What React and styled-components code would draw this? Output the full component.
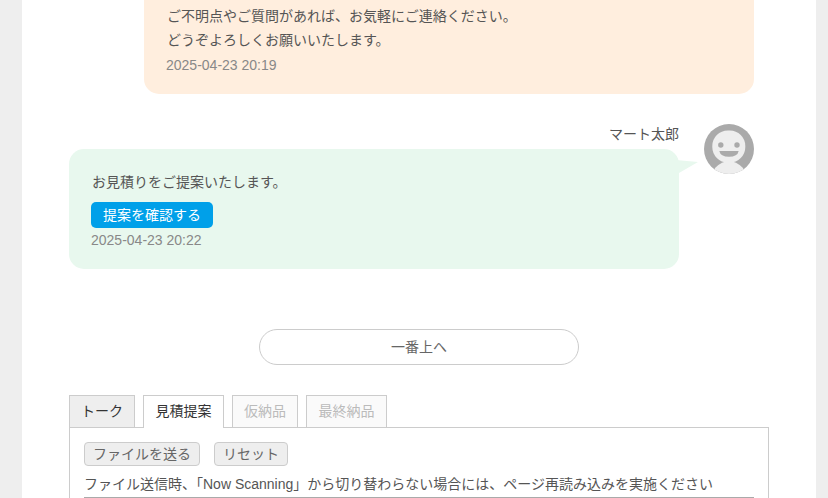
import React from "react";
import styled, { createGlobalStyle } from "styled-components";

const Global = createGlobalStyle`
  html, body { margin: 0; padding: 0; height: 498px; overflow: hidden; background: #eeeeee; }
  body { font-family: "Liberation Sans", "Noto Sans CJK JP", sans-serif; font-size: 14px; color: #555; }
  * { box-sizing: border-box; }
`;
const Page = styled.main`
  width: 794px; height: 498px; margin-left: 22px; background: #fff; overflow: hidden;
  padding: 0 47px;
`;
const PeachBubble = styled.section`
  width: 610px; height: 94px; margin-left: 75px; padding: 4px 22px 0 23px;
  background: #ffeede; border-radius: 0 0 15px 15px;
`;
const Line = styled.p`
  margin: 0; line-height: 24px; color: #555; white-space: nowrap;
`;
const Time = styled.div`
  line-height: 20px; color: #888; margin-top: 2px;
`;
const PeachTime = styled(Time)`
  margin-top: 3px; margin-left: -1px;
`;
const SenderRow = styled.div`
  display: flex; justify-content: flex-end; gap: 25px; margin-top: 30px; height: 25px; width: 685px;
`;
const Name = styled.span`
  line-height: 21px; color: #555;
`;
const Avatar = styled.svg`
  width: 50px; height: 50px; flex: none; display: block; position: relative; z-index: 1;
`;
const GreenBubble = styled.section`
  position: relative; width: 610px; height: 120px; padding: 21px 22px 0 22px;
  background: #e8f8ee; border-radius: 15px;
`;
const Tail = styled.svg`
  position: absolute; left: 607px; top: 10px; width: 24px; height: 16px;
`;
const GreenLine = styled(Line)`
  margin-left: 1px;
`;
const Cta = styled.a`
  display: block; width: 122px; height: 26px; margin-top: 8px; border-radius: 5px;
  background: #00a0e9; color: #fff; line-height: 26px; text-align: center;
`;
const TopLink = styled.a`
  display: block; width: 320px; height: 36px; margin: 60px 0 0 190px;
  border: 1px solid #ccc; border-radius: 18px; background: #fff;
  line-height: 34px; text-align: center; color: #666;
`;
const Tabs = styled.nav`
  display: flex; gap: 8px; margin-top: 30px; position: relative; z-index: 1;
`;
const Tab = styled.div`
  width: ${p => p.$w}px; height: 33px; border: 1px solid #ccc; line-height: 30px; text-align: center;
  border-bottom: ${p => (p.$active ? "none" : "1px solid #ccc")};
  background: ${p => (p.$active ? "#fff" : p.$disabled ? "#fafafa" : "#eee")};
  color: ${p => (p.$disabled ? "#bbb" : "#333")};
`;
const Panel = styled.section`
  width: 700px; height: 100px; margin-top: -1px; padding: 14px 14px 0; border: 1px solid #ccc;
`;
const Actions = styled.div`
  display: flex; gap: 14px;
`;
const Small = styled.button`
  height: 24px; padding: 0; width: ${p => p.$w}px; border: 1px solid #ccc; border-radius: 4px; background: #eee;
  font: 14px/22px "Liberation Sans", "Noto Sans CJK JP", sans-serif; color: #666;
`;
const Note = styled.p`
  margin: 8px 0 0; line-height: 20px; color: #555; white-space: nowrap;
  padding-bottom: 3px; border-bottom: 1px solid #aaa;
`;

export default function App() {
  return (
    <>
      <Global />
      <Page>
        <PeachBubble>
          <Line>ご不明点やご質問があれば、お気軽にご連絡ください。</Line>
          <Line>どうぞよろしくお願いいたします。</Line>
          <PeachTime>2025-04-23 20:19</PeachTime>
        </PeachBubble>
        <SenderRow>
          <Name>マート太郎</Name>
          <Avatar viewBox="0 0 50 50">
            <circle cx="25" cy="25" r="25" fill="#aaaaaa" />
            <clipPath id="c"><circle cx="25" cy="25" r="25" /></clipPath>
            <path clipPath="url(#c)" d="M11 44 Q18 37 25 37 Q32 37 39 44 L41 50 L9 50 Z" fill="#eeeeee" />
            <rect x="8.300" y="6.500" width="33" height="32" rx="15.500" fill="#eeeeee" />
            <circle cx="16.800" cy="21" r="2.700" fill="#aaaaaa" />
            <circle cx="33" cy="21" r="2.700" fill="#aaaaaa" />
            <path d="M15.300 27 H34.700 Q33.500 32.800 25 32.800 Q16.500 32.800 15.300 27 Z" fill="#aaaaaa" />
          </Avatar>
        </SenderRow>
        <GreenBubble>
          <Tail viewBox="0 0 24 16"><path d="M0 1 L22 3 L3 14 L0 14 Z" fill="#e8f8ee" /></Tail>
          <GreenLine>お見積りをご提案いたします。</GreenLine>
          <Cta>提案を確認する</Cta>
          <Time>2025-04-23 20:22</Time>
        </GreenBubble>
        <TopLink>一番上へ</TopLink>
        <Tabs>
          <Tab $w={66}>トーク</Tab>
          <Tab $w={81} $active>見積提案</Tab>
          <Tab $w={66} $disabled>仮納品</Tab>
          <Tab $w={81} $disabled>最終納品</Tab>
        </Tabs>
        <Panel>
          <Actions>
            <Small $w={116}>ファイルを送る</Small>
            <Small $w={74}>リセット</Small>
          </Actions>
          <Note>ファイル送信時、「Now Scanning」から切り替わらない場合には、ページ再読み込みを実施ください</Note>
        </Panel>
      </Page>
    </>
  );
}
